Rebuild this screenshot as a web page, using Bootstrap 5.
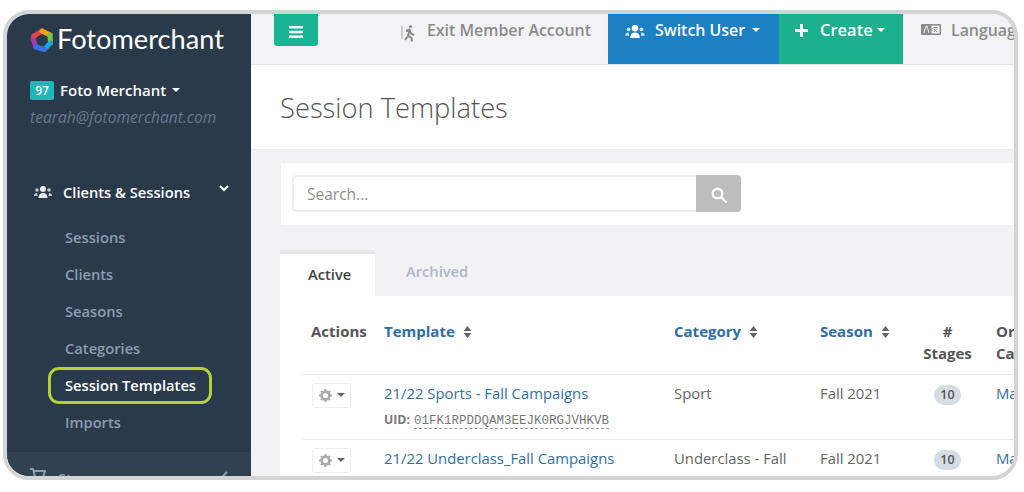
<!DOCTYPE html>
<html lang="en"><head><meta charset="utf-8"><title>Session Templates</title>
<link href="https://cdn.jsdelivr.net/npm/bootstrap@5.3.0/dist/css/bootstrap.min.css" rel="stylesheet">
<style>
html,body{height:492px;overflow:hidden;background:#fff;font-family:"Open Sans",sans-serif;color:#666}
.fm-frame{margin:10px 2px 0 3px;width:1015px;height:470px;border:4px solid #d3d4d4;border-radius:26px;overflow:hidden;background:#f2f2f4}
.fm-side{width:244px;background:#2a3a4b;color:#fff;flex:none}
.fm-side>*{flex:none}
.fm-logo{padding:7px 0 0 23px;height:59px;gap:3px;font-family:Lato,sans-serif;font-size:27.2px;line-height:28px}
.fm-logo svg{margin-top:7px;flex:none}
.fm-num{width:24px;height:19px;background:#1db9b9;border-radius:2px;font-size:12px;font-weight:600;line-height:19px;text-align:center}
.fm-acct{padding:7px 0 0 23px;font-size:15px;font-weight:600;line-height:20px;gap:6px}
.fm-mail{padding:7px 0 0 23px;font-size:15.6px;font-style:italic;color:#68798e;line-height:20px;height:69px;white-space:nowrap}
.fm-caret{display:inline-block;border:4.5px solid transparent;border-top-color:currentColor;border-bottom:0}
.fm-group{padding:12px 0 0 27px;height:50px;font-size:14.7px;font-weight:600;gap:11px}
.fm-chev{margin:4px 0 0 18px}
.fm-sub a{display:block;height:37px;line-height:37px;padding-left:58px;font-size:14.7px;font-weight:600;color:#8c9db2;text-decoration:none}
.fm-sub a.fm-on{color:#fff;width:164px;height:37px;margin-left:41px;padding-left:14px;line-height:31px;border:3px solid #b4d236;border-radius:11px}
.fm-store{margin-top:11px;height:40px;background:#304152;padding:15px 0 0 23px;font-size:14.7px;font-weight:600;color:#8c9db2;gap:12px}
.fm-main{min-width:0;overflow:hidden}
.fm-top{height:51px;background:#f3f3f5;border-bottom:1px solid #e6e6e8;flex:none;font-size:15.9px;font-weight:600;line-height:20px}
.fm-top>*{flex:none}
.fm-burger{width:44px;height:32px;margin-left:23px;padding:0;background:#1ab394;border:0;border-radius:0 0 3px 3px;color:#fff}
.fm-exit{margin-left:82px;width:208px;padding-top:6px;color:#8b8b8b;gap:10px}
.fm-switch{width:171px;height:50px;background:#1d7fc4;color:#fff;padding:6px 0 0 17px;gap:10px}
.fm-create{width:124px;height:50px;background:#1cb08f;color:#fff;padding:6px 0 0 16px;gap:12px;font-size:16.5px}
.fm-lang{padding:6px 0 0 18px;color:#8b8b8b;gap:10px;white-space:nowrap}
.fm-head{height:85px;background:#fff;border-bottom:1px solid #ececee;flex:none;padding:26px 0 0 29px}
.fm-head h1{font-size:27.3px;font-weight:300;color:#555;line-height:34px;margin:0}
.fm-search{margin:13px 0 0 30px;height:62px;background:#fff;padding:12px 11px;flex:none}
.fm-search .input-group{width:449px;height:37px}
.fm-search .form-control{border:2px solid #eee;border-right:0;font-size:15.5px;padding:2px 13px 0;border-radius:5px 0 0 5px;box-shadow:none}
.fm-search .form-control::placeholder{color:#8e8e8e}
.fm-search .btn{width:45px;background:#bdbdbd;border:0;padding:0;color:#fff;border-radius:0 4px 4px 0}
.fm-tabs{margin:25px 0 0 29px;height:46px;flex:none;border:0;flex-wrap:nowrap}
.fm-tabs .nav-link{border:0;border-radius:0;font-size:14.7px;font-weight:600;padding:0;background:none}
.fm-tabs .nav-link.active{width:95px;height:46px;background:#fff;border-top:4px solid #e8e8ea;color:#444;padding:10px 0 0 28px;line-height:20px}
.fm-tabs .fm-arch{color:#b0b6c6;margin-left:31px;padding-top:11px;line-height:20px}
.fm-pane{margin-left:29px;background:#fff;padding-left:23px;flex:1 1 auto;min-height:0;overflow:hidden}
.fm-tbl{width:760px;table-layout:fixed;margin:0;font-size:14.85px;color:#666;--bs-table-color:#666}
.fm-tbl th,.fm-tbl td{padding:0 0 0 8px;line-height:22px;border-bottom:1px solid #e9e9eb;vertical-align:top;white-space:nowrap;overflow:hidden}
.fm-tbl th{height:78px;padding-top:24px;font-size:15px;font-weight:700;color:#555}
.fm-tbl th a{color:#2f6ea5;text-decoration:none}
.fm-tbl td{height:65px;padding-top:7px}
.fm-tbl td a{color:#33719f;text-decoration:none}
.fm-sort{margin-left:8px;vertical-align:-1px}
.fm-gear{width:39px;height:25px;padding:0;border:1px solid #efefef;border-radius:3px;background:#fff;color:#666;gap:5px;margin:1px 0 0 1px}
.fm-gear .fm-caret{border-width:4px;border-bottom:0}
.fm-uid{font-size:12.3px;font-weight:700;color:#777;line-height:16px;margin-top:8px}
.fm-uid span{font-family:"Liberation Mono",monospace;font-size:12.5px;font-weight:400;border-bottom:1px dashed #999;margin-left:4px}
.fm-pill{background:#d5dde2;color:#555;border-radius:10px;width:27px;height:20px;font-size:12.5px;font-weight:600;line-height:20px;padding:0}
.fm-ctr{text-align:center;padding-right:16px!important}
</style></head>
<body>
<div class="fm-frame d-flex">
  <aside class="fm-side d-flex flex-column">
    <div class="fm-logo d-flex align-items-start">
      <svg width="24" height="25" viewBox="0 0 24 25" fill="none" stroke-width="5" stroke-linecap="round">
        <path d="M6 19 3 11 4 8" stroke="#a13cb8"/><path d="M4 8 12 3" stroke="#e8413f"/><path d="M12 3 20 7" stroke="#f59b23"/><path d="M20 7 20.5 15" stroke="#7cc343"/><path d="M20.5 15 14 21.5" stroke="#1ba8d8"/><path d="M14 21.5 6 19" stroke="#3a6fe0"/>
      </svg>
      <span class="pt-1">Fotomerchant</span>
    </div>
    <div class="fm-acct d-flex align-items-center">
      <span class="fm-num">97</span><span>Foto Merchant</span><span class="fm-caret"></span>
    </div>
    <div class="fm-mail">tearah@fotomerchant.com</div>
    <div class="fm-group d-flex align-items-start">
      <svg width="18" height="14" viewBox="0 0 18 14" fill="#e8ebef" class="mt-1"><circle cx="9" cy="4" r="3"/><path d="M4.5 13c0-3.5 2-5 4.5-5s4.5 1.5 4.5 5z"/><circle cx="3" cy="5" r="1.8" opacity=".8"/><circle cx="15" cy="5" r="1.8" opacity=".8"/><path d="M0 11c0-2 1-3 3-3l.6 3zM18 11c0-2-1-3-3-3l-.6 3z" opacity=".8"/></svg>
      <span>Clients &amp; Sessions</span>
      <svg width="10" height="7" viewBox="0 0 10 7" fill="none" stroke="#fff" stroke-width="2" class="fm-chev"><path d="M1 1l4 4 4-4"/></svg>
    </div>
    <nav class="fm-sub">
      <a href="#">Sessions</a><a href="#">Clients</a><a href="#">Seasons</a><a href="#">Categories</a><a href="#" class="fm-on">Session Templates</a><a href="#">Imports</a>
    </nav>
    <div class="fm-store d-flex align-items-start">
      <svg width="16" height="14" viewBox="0 0 16 14" fill="none" stroke="#8c9db2" stroke-width="2"><path d="M0 2h3l2 8h8l2-6H4"/></svg>
      <span>Store</span>
      <svg width="7" height="10" viewBox="0 0 7 10" fill="none" stroke="#8c9db2" stroke-width="2" style="margin:4px 0 0 113px"><path d="M6 1 2 5l4 4"/></svg>
    </div>
  </aside>
  <main class="fm-main flex-grow-1 d-flex flex-column">
    <div class="fm-top d-flex">
      <button class="fm-burger btn" aria-label="Menu"><svg width="14" height="12" viewBox="0 0 14 12" fill="#fff"><rect y="0" width="14" height="2.6" rx=".8"/><rect y="4.7" width="14" height="2.6" rx=".8"/><rect y="9.4" width="14" height="2.6" rx=".8"/></svg></button>
      <div class="fm-exit d-flex align-items-start">
        <svg width="17" height="18" viewBox="0 0 17 18" fill="none" stroke="#8b8b8b" stroke-width="2" class="mt-1"><circle cx="10.5" cy="2.5" r="1.6" fill="#8b8b8b" stroke="none"/><path d="M6 7l3.500-1.500 1.500 4 3 1.500M9.500 6l-1.500 6-3 4M8.500 12l3 2 .5 3.500"/><path d="M2 2v13" stroke-width="1.2" opacity=".6"/></svg>
        <span>Exit Member Account</span>
      </div>
      <div class="fm-switch d-flex align-items-start">
        <svg width="20" height="15" viewBox="0 0 18 14" fill="#fff" class="mt-1"><circle cx="9" cy="4" r="3"/><path d="M4.5 13c0-3.5 2-5 4.5-5s4.500 1.500 4.500 5z"/><circle cx="3" cy="5" r="1.8" opacity=".8"/><circle cx="15" cy="5" r="1.8" opacity=".8"/><path d="M0 11c0-2 1-3 3-3l.6 3zM18 11c0-2-1-3-3-3l-.6 3z" opacity=".8"/></svg>
        <span>Switch User</span><span class="fm-caret mt-2" style="margin-left:-3px"></span>
      </div>
      <div class="fm-create d-flex align-items-start">
        <svg width="13" height="13" viewBox="0 0 13 13" fill="#fff" class="mt-1"><rect x="5" width="3" height="13"/><rect y="5" width="13" height="3"/></svg>
        <span>Create</span><span class="fm-caret mt-2" style="margin-left:-8px"></span>
      </div>
      <div class="fm-lang d-flex align-items-start">
        <svg width="20" height="11" viewBox="0 0 20 11" class="mt-1"><rect width="20" height="11" rx="1" fill="#8b8b8b"/><rect x="10.5" y="1.5" width="8" height="8" fill="#f3f3f5"/><path d="M3 9l2-7h1l2 7" stroke="#f3f3f5" stroke-width="1" fill="none"/><path d="M12.500 3.500h4M14.500 3v1M13 8l3-3.500M13 5l3 3" stroke="#8b8b8b" stroke-width="1" fill="none"/></svg>
        <span>Language</span>
      </div>
    </div>
    <header class="fm-head"><h1>Session Templates</h1></header>
    <div class="fm-search">
      <div class="input-group">
        <input class="form-control" type="text" placeholder="Search...">
        <button class="btn" aria-label="Search"><svg width="16" height="16" viewBox="0 0 16 16" fill="none" stroke="#fff" stroke-width="2.4"><circle cx="6.500" cy="6.500" r="4.800"/><path d="M10 10l5 5" stroke-linecap="round"/></svg></button>
      </div>
    </div>
    <ul class="nav fm-tabs">
      <li class="nav-item"><a class="nav-link active" href="#">Active</a></li>
      <li class="nav-item"><a class="nav-link fm-arch" href="#">Archived</a></li>
    </ul>
    <div class="fm-pane">
      <table class="table fm-tbl">
        <colgroup><col style="width:73px"><col style="width:290px"><col style="width:146px"><col style="width:103px"><col style="width:73px"><col style="width:75px"></colgroup>
        <thead><tr>
          <th>Actions</th>
          <th><a href="#">Template</a><svg class="fm-sort" width="9" height="12" viewBox="0 0 9 12" fill="#666"><path d="M.5 5 4.500 0l4 5zM.5 7l4 5 4-5z"/></svg></th>
          <th><a href="#">Category</a><svg class="fm-sort" width="9" height="12" viewBox="0 0 9 12" fill="#666"><path d="M.5 5 4.500 0l4 5zM.5 7l4 5 4-5z"/></svg></th>
          <th><a href="#">Season</a><svg class="fm-sort" width="9" height="12" viewBox="0 0 9 12" fill="#666"><path d="M.5 5 4.500 0l4 5zM.5 7l4 5 4-5z"/></svg></th>
          <th class="fm-ctr">#<br>Stages</th>
          <th>Or<br>Ca</th>
        </tr></thead>
        <tbody>
          <tr>
            <td><button class="fm-gear btn d-inline-flex align-items-center justify-content-center" aria-label="Actions"><svg width="13" height="13" viewBox="0 0 13 13"><circle cx="6.500" cy="6.500" r="3.900" fill="none" stroke="#aaa" stroke-width="2.600"/><path d="M6.500 0v13M0 6.500h13M2 2l9 9M11 2l-9 9" stroke="#aaa" stroke-width="2" stroke-dasharray="2 9 2"/></svg><span class="fm-caret"></span></button></td>
            <td><a href="#">21/22 Sports - Fall Campaigns</a><div class="fm-uid">UID:<span>01FK1RPDDQAM3EEJK0RGJVHKVB</span></div></td>
            <td>Sport</td><td>Fall 2021</td>
            <td class="fm-ctr"><span class="badge fm-pill">10</span></td>
            <td><a href="#">Ma</a></td>
          </tr>
          <tr>
            <td><button class="fm-gear btn d-inline-flex align-items-center justify-content-center" aria-label="Actions"><svg width="13" height="13" viewBox="0 0 13 13"><circle cx="6.500" cy="6.500" r="3.900" fill="none" stroke="#aaa" stroke-width="2.600"/><path d="M6.500 0v13M0 6.500h13M2 2l9 9M11 2l-9 9" stroke="#aaa" stroke-width="2" stroke-dasharray="2 9 2"/></svg><span class="fm-caret"></span></button></td>
            <td><a href="#">21/22 Underclass_Fall Campaigns</a></td>
            <td>Underclass - Fall</td><td>Fall 2021</td>
            <td class="fm-ctr"><span class="badge fm-pill">10</span></td>
            <td><a href="#">Ma</a></td>
          </tr>
        </tbody>
      </table>
    </div>
  </main>
</div>
</body></html>
